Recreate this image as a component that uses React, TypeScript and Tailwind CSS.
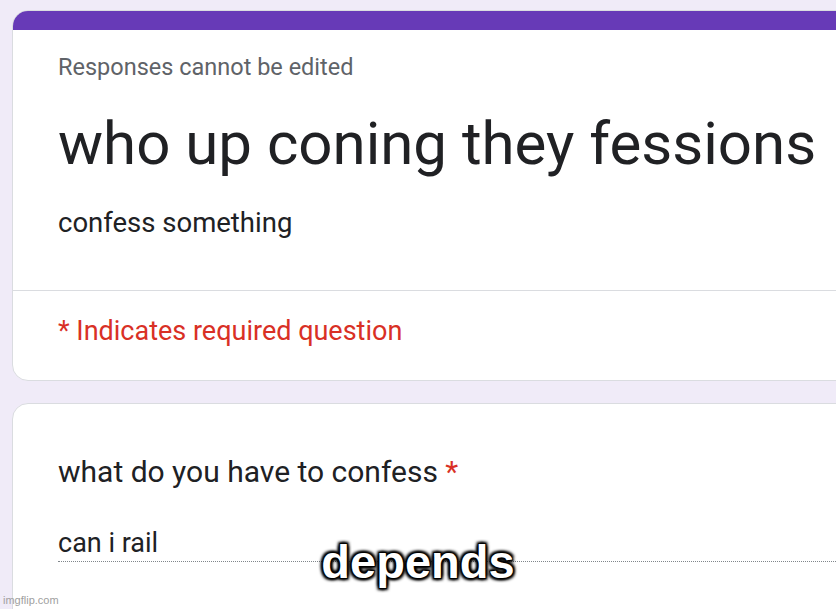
const roboto = { fontFamily: 'Roboto, "Liberation Sans", sans-serif' };

export default function App() {
  return (
    <div
      className="relative h-[609px] w-[836px] overflow-hidden bg-[#f0ebf8]"
      style={roboto}
    >
      <div className="flex w-[900px] flex-col gap-[22px] pl-3 pt-[10px]">
        {/* header card */}
        <div className="overflow-hidden rounded-2xl border border-[#dadce0] bg-white">
          <div className="h-[19px] bg-[#673ab7]" />
          <div className="px-[45px] pt-[22px] pb-[51px]">
            <p className="text-[23.5px] leading-[30px] text-[#5f6368]">Responses cannot be edited</p>
            <h1 className="mt-[27px] text-[60px] leading-[70px] text-[#202124]">
              who up coning they fessions
            </h1>
            <p className="mt-[28px] text-[27.5px] leading-[32px] text-[#202124]">confess something</p>
          </div>
          <div className="border-t border-[#dadce0] px-[45px] pt-[24px] pb-[33px]">
            <p className="text-[27px] leading-[32px] text-[#d93025]">* Indicates required question</p>
          </div>
        </div>

        {/* question card */}
        <div className="h-[300px] rounded-2xl border border-[#dadce0] bg-white px-[45px] pt-[50px]">
          <p className="text-[30px] leading-[36px] text-[#202124]">
            what do you have to confess <span className="text-[#d93025]">*</span>
          </p>
          <div className="mt-[37px] w-[780px] border-b border-dotted border-[#80868b] pb-[2px]">
            <p className="text-[27px] leading-[32px] text-[#202124]">can i rail</p>
          </div>
        </div>
      </div>

      {/* meme caption */}
      <div
        className="absolute left-0 right-0 top-[534px] text-center text-[47px] font-bold leading-[56px] text-white"
        style={{
          fontFamily: '"Liberation Sans", Arial, sans-serif',
          WebkitTextStroke: '1.5px black',
          paintOrder: 'stroke fill',
          textShadow:
            '0 0 3px #000, 0 0 3px #000, 2px 2px 3px #000, -2px -2px 3px #000, 2px -2px 3px #000, -2px 2px 3px #000',
        }}
      >
        depends
      </div>

      <div
        className="absolute bottom-[2px] left-[3px] text-[11px] leading-[14px] text-[#a0a0a0]"
        style={{ fontFamily: '"Liberation Sans", Arial, sans-serif' }}
      >
        imgflip.com
      </div>
    </div>
  );
}
